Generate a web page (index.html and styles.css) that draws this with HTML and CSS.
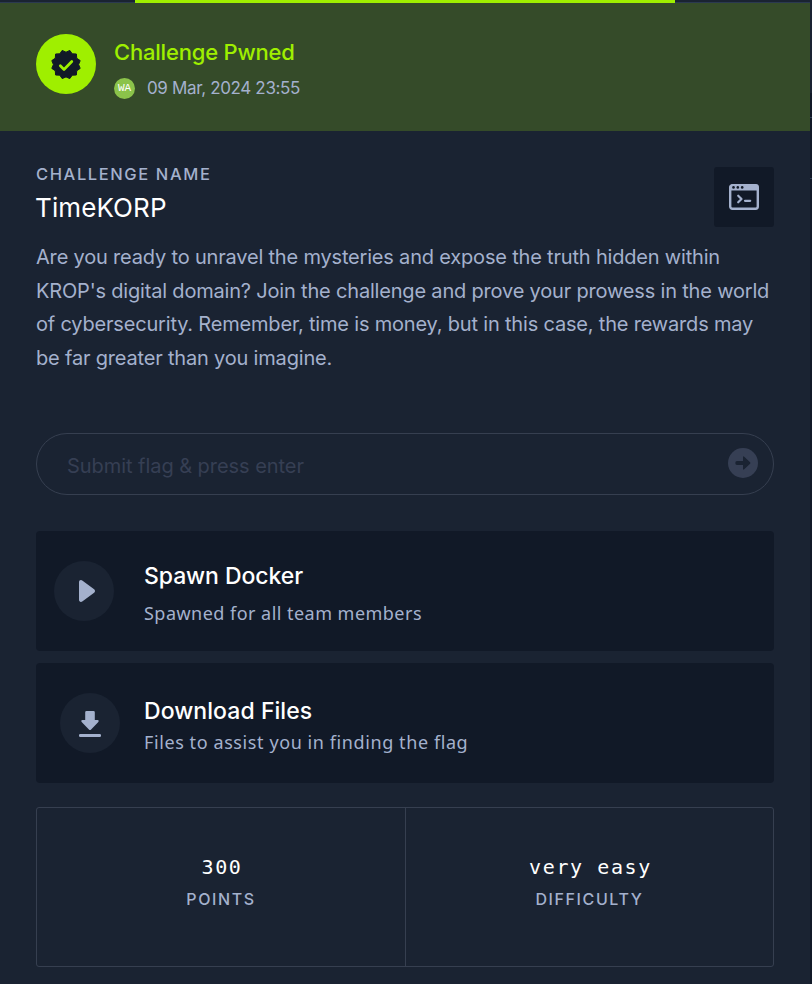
FILE: index.html
```html
<!DOCTYPE html>
<html lang="en">
<head>
<meta charset="utf-8">
<title>TimeKORP</title>
<link rel="stylesheet" href="styles.css">
</head>
<body>
<main class="panel">
  <div class="tabs"><span class="tab-active"></span></div>
  <header class="banner">
    <div class="badge">
      <svg width="32" height="32" viewBox="0 0 32 32"><path d="M16 4.200 19.800 2.400 22.200 5.800 26.400 6 26.700 10.200 30.200 12.600 28.600 16.500 30.200 20.400 26.700 22.800 26.400 27 22.200 27.200 19.800 30.600 16 28.900 12.200 30.600 9.800 27.200 5.600 27 5.300 22.800 1.800 20.400 3.400 16.500 1.800 12.600 5.300 10.200 5.600 6 9.800 5.800 12.200 2.400Z" fill="#111927" stroke="#111927" stroke-linejoin="round"/><path d="m10.300 17.800 3.700 3.700 7.800-8" fill="none" stroke="#9fef00" stroke-width="2.700" stroke-linecap="round" stroke-linejoin="round"/></svg>
    </div>
    <div class="banner-text">
      <h1 class="pwned">Challenge Pwned</h1>
      <div class="meta"><span class="avatar">WA</span><time class="date">09 Mar, 2024 23:55</time></div>
    </div>
  </header>
  <div class="content">
    <section class="intro">
      <div>
        <div class="label challenge">CHALLENGE NAME</div>
        <h2 class="name">TimeKORP</h2>
      </div>
      <div class="category">
        <svg width="32" height="28" viewBox="0 0 32 28" fill="none" stroke="#a4b1cd" stroke-linecap="round" stroke-linejoin="round"><rect x="2.200" y="2.200" width="27.600" height="23.600" rx="2.200" stroke-width="2.400"/><path d="M2 3.500Q2 2 3.500 2H28.500Q30 2 30 3.500V7H2Z" fill="#a4b1cd" stroke-width="1"/><g fill="#111927" stroke="none"><circle cx="5.500" cy="4.400" r="1.300"/><circle cx="9.800" cy="4.400" r="1.300"/><circle cx="14.200" cy="4.400" r="1.300"/></g><path d="m10.200 12.700 3.300 3.300-3.300 3.300M17 17.800h5.200" stroke-width="2.200"/></svg>
      </div>
    </section>
    <p class="description">Are you ready to unravel the mysteries and expose the truth hidden within<br>KROP's digital domain? Join the challenge and prove your prowess in the world<br>of cybersecurity. Remember, time is money, but in this case, the rewards may<br>be far greater than you imagine.</p>
    <div class="flag">
      <span class="placeholder">Submit flag &amp; press enter</span>
      <svg width="30" height="30" viewBox="0 0 30 30"><circle cx="15" cy="15" r="15" fill="#363f54"/><path d="M9 13H15V9.300Q15 7.700 16.200 8.700L22.100 14.300Q22.700 15 22.100 15.700L16.200 21.300Q15 22.300 15 20.700V17H9Q7.300 17 7.300 15T9 13Z" fill="#1a2332"/></svg>
    </div>
    <section class="action spawn">
      <div class="round"><svg width="16" height="22" viewBox="0 0 16 22"><path d="M0 2.200v17.600c0 2 1.900 2.800 3.600 1.500L15.100 12.700c1.200-.9 1.200-2.500 0-3.400L3.600.7C1.900-.6 0 .2 0 2.200Z" fill="#a4b1cd"/></svg></div>
      <div><h3 class="title spawn-title">Spawn Docker</h3><p class="sub spawn-sub">Spawned for all team members</p></div>
    </section>
    <section class="action download">
      <div class="round"><svg width="22" height="28" viewBox="0 0 22 28"><path d="M7.500 2h7q1.300 0 1.300 1.300V11h2.700c1.500 0 1.500 1.300.6 2.200l-7 7.300q-1.100 1.100-2.200 0l-7-7.300C2 12.300 2 11 3.500 11h2.700V3.300Q6.200 2 7.500 2Z" fill="#a4b1cd"/><rect y="25" width="22" height="3" rx="1.200" fill="#a4b1cd"/></svg></div>
      <div><h3 class="title download-title">Download Files</h3><p class="sub download-sub">Files to assist you in finding the flag</p></div>
    </section>
    <section class="stats">
      <div class="stat"><span class="value">300</span><span class="label">POINTS</span></div>
      <div class="stat"><span class="value">very easy</span><span class="label">DIFFICULTY</span></div>
    </section>
  </div>
</main>
<aside class="backdrop"></aside>
</body>
</html>
```

FILE: styles.css
```css
* { box-sizing: border-box; }
body { margin: 0; width: 812px; height: 984px; display: flex; overflow: hidden; background: #1a2332; color: #a4b1cd; font-family: Inter, "Liberation Sans", sans-serif; }
h1, h2, h3, p { margin: 0; }
svg { display: block; flex: none; }
.panel { width: 810px; height: 984px; }
.backdrop { width: 2px; background: linear-gradient(#1a2332 93px, #111927 93px 117px, #313f55 117px 118px, #111927 118px 178px, #313f55 178px 179px, #111927 179px); }
.tabs { height: 3px; padding-left: 135px; background: linear-gradient(#1a2332 2px, #2b3950 2px); }
.tab-active { display: block; width: 540px; height: 3px; background: #9fef00; }
.banner { height: 128px; padding: 31px 36px; display: flex; gap: 18px; background: #354b29; }
.badge { width: 60px; height: 60px; border-radius: 50%; background: #9fef00; display: grid; place-items: center; }
.banner-text { white-space: nowrap; }
.pwned { font-size: 22px; font-weight: 500; line-height: 36px; letter-spacing: -.2px; color: #9fef00; }
.meta { display: flex; align-items: center; height: 22px; margin-top: 7px; }
.avatar { width: 21px; height: 21px; margin-right: 12px; border-radius: 50%; background: #8bc34a; color: #fff; font: 11px/21px "Liberation Mono", monospace; text-align: center; }
.date { font-size: 17px; letter-spacing: -.35px; }
.content { padding: 36px 36px 0; }
.intro { display: flex; justify-content: space-between; height: 60px; white-space: nowrap; }
.label { font-size: 16px; line-height: 16px; font-weight: 550; letter-spacing: 1.6px; }
.challenge { margin-top: -1px; font-size: 16.5px; }
.name { margin: 9px 0 0 -1px; font-size: 26px; line-height: 34px; letter-spacing: .1px; font-weight: 400; color: #fff; }
.category { width: 60px; height: 60px; display: grid; place-items: center; border-radius: 3px; background: #111927; }
.description { margin-top: 14px; font-size: 20px; line-height: 33.6px; letter-spacing: -.185px; white-space: nowrap; }
.flag { height: 62px; margin-top: 57.6px; padding: 0 15px 2px 30px; display: flex; align-items: center; justify-content: space-between; border: 1px solid #363f50; border-radius: 31px; }
.placeholder { font-size: 20px; letter-spacing: -.05px; padding-top: 6px; color: #363f54; }
.action { height: 120px; display: flex; background: #111927; border-radius: 4px; white-space: nowrap; }
.spawn { margin-top: 36px; padding: 30px 18px; gap: 30px; }
.spawn svg { margin-left: 6px; }
.download { margin-top: 12px; padding: 30px 24px; gap: 24px; }
.round { width: 60px; height: 60px; border-radius: 50%; background: #1a2332; display: grid; place-items: center; }
.title { font-size: 23px; line-height: 30px; font-weight: 550; letter-spacing: -.08px; color: #fff; }
.sub { font: 18px/26px "Noto Sans", sans-serif; }
.spawn-sub { margin-top: 9px; letter-spacing: .47px; }
.download-title { margin-top: 3px; letter-spacing: .06px; }
.download-sub { margin-top: 3px; letter-spacing: .59px; }
.stats { display: grid; grid-template-columns: 369px 1fr; height: 160px; margin-top: 24px; border: 1px solid #363f50; border-radius: 3px; }
.stat { display: flex; flex-direction: column; align-items: center; padding-top: 45px; }
.stat:first-child { border-right: 1px solid #363f50; }
.value { margin-left: 2px; color: #fff; font: 20px/28px "DejaVu Sans Mono", monospace; letter-spacing: 1.6px; }
.stat .label { margin-top: 10px; }
```
